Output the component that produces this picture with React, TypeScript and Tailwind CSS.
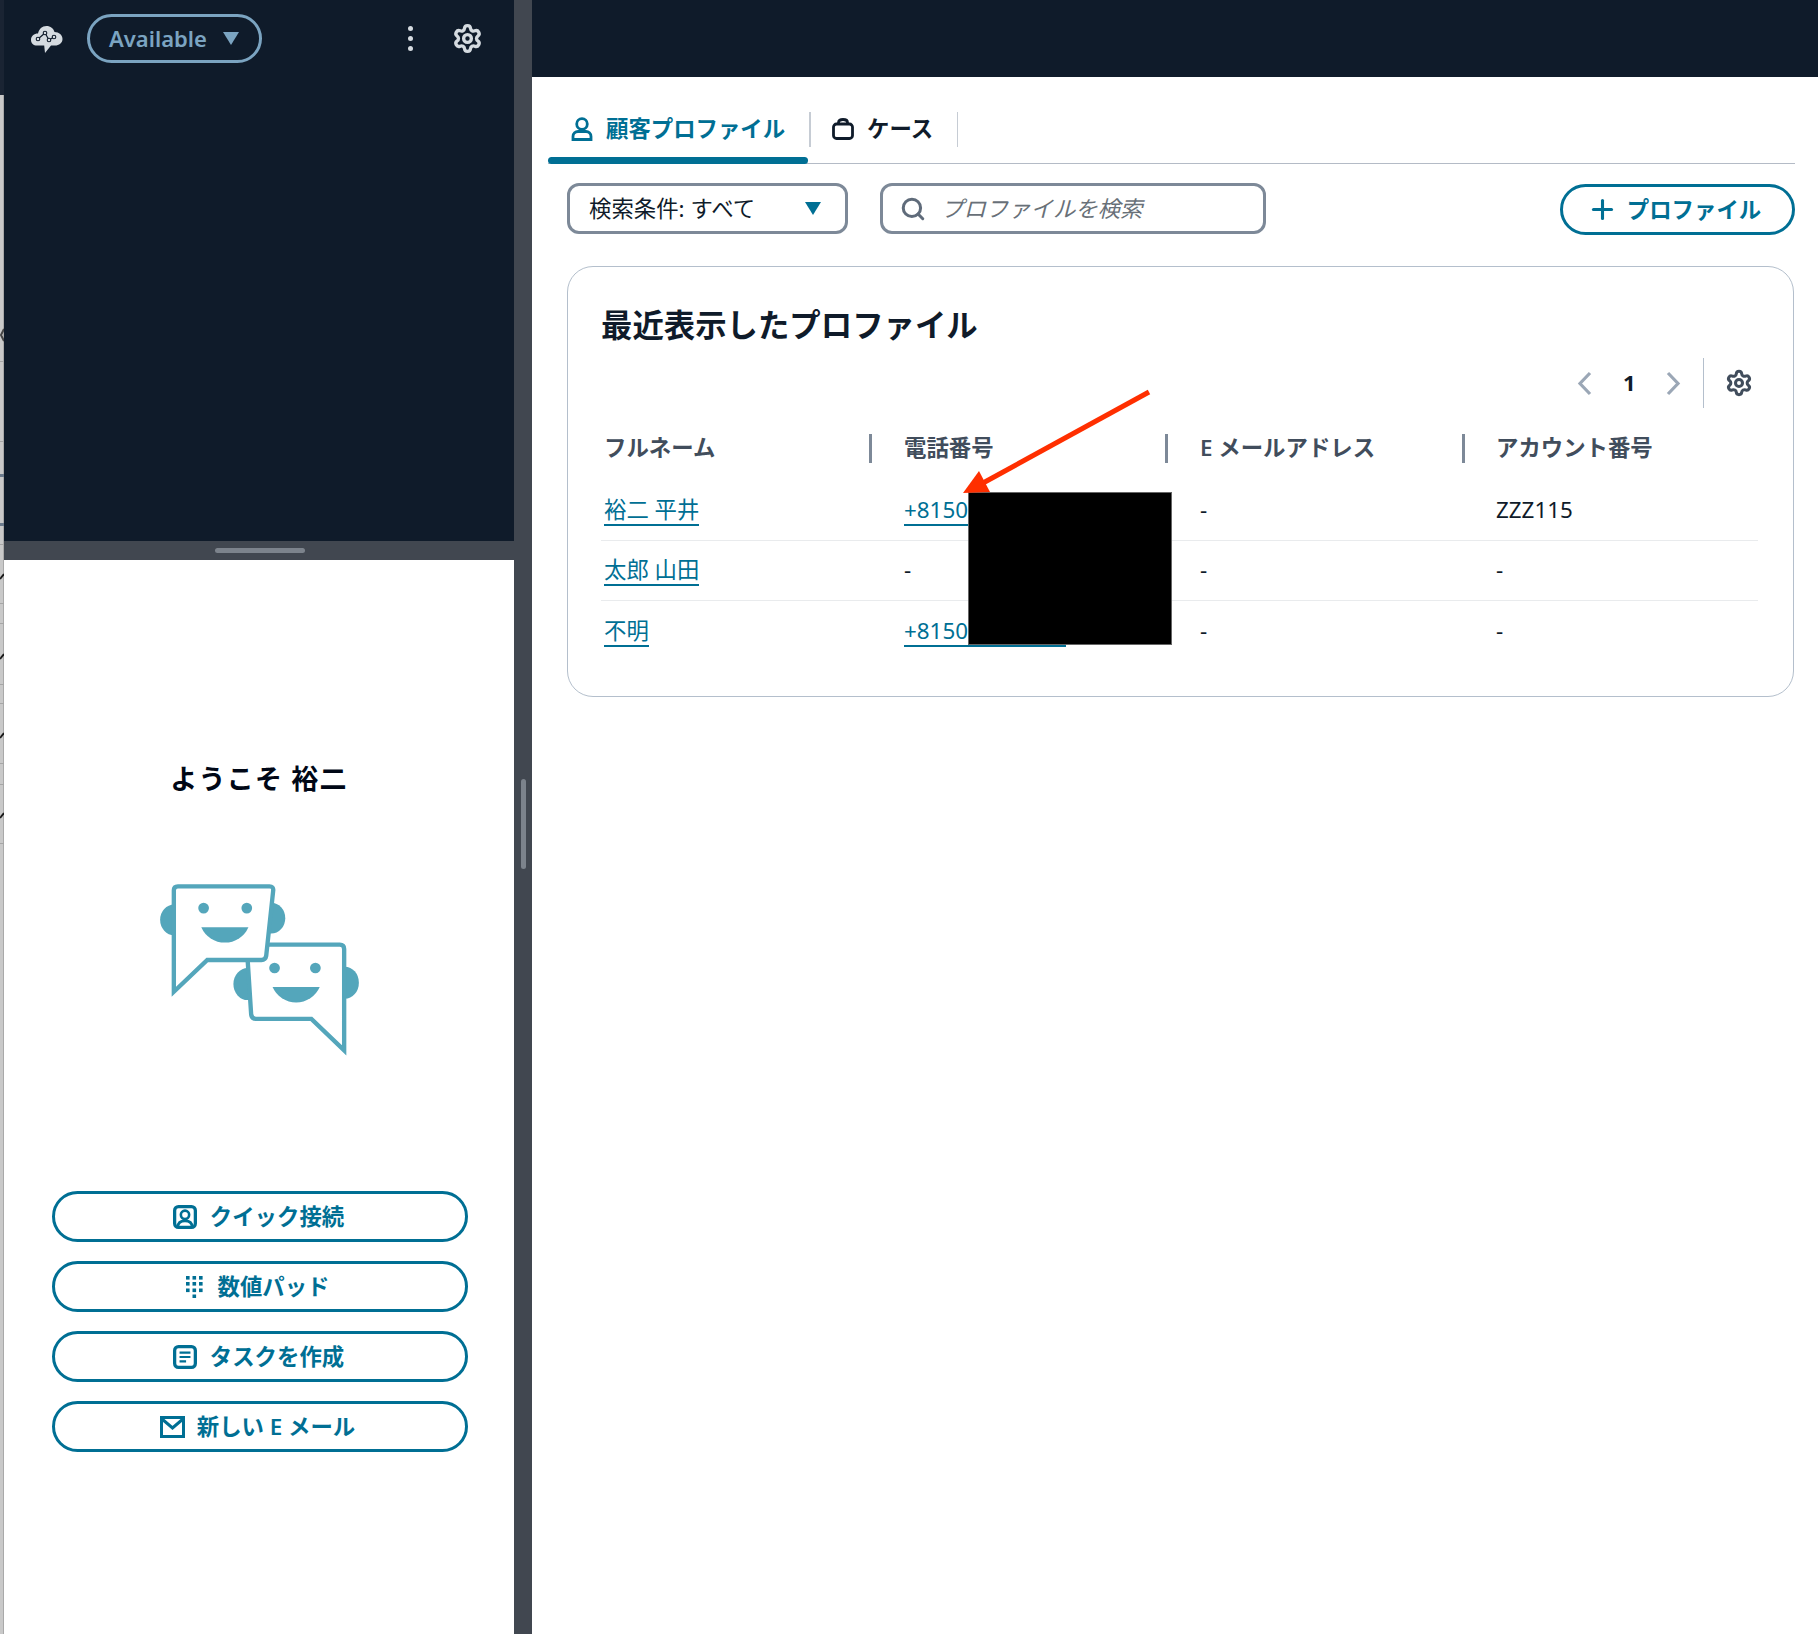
import { Plus, Search, Settings } from "lucide-react";

const buttons = [
  { label: "クイック接続", icon: <ContactIcon /> },
  { label: "数値パッド", icon: <DialpadIcon /> },
  { label: "タスクを作成", icon: <TaskIcon /> },
  { label: "新しい E メール", icon: <MailIcon /> },
];

const rows = [
  { name: "裕二 平井", phone: true, email: "-", account: "ZZZ115" },
  { name: "太郎 山田", phone: false, email: "-", account: "-" },
  { name: "不明", phone: true, email: "-", account: "-" },
];

function CloudLogo() {
  return (
    <svg width="50" height="45" viewBox="0 0 50 45" className="-ml-[9px]">
      <path
        d="M10 24c0-4 3-6.500 7-6.500C18 13 21 10 25.500 10c4 0 7 2.500 8 6 4.500 0 8 3 8 7 0 4-3.500 6.500-7.500 6.500h-4L24 37l-.8-7.500H16c-3.500 0-6-2-6-5.500z"
        fill="#d5dbe0"
      />
      <path d="M17 23l7-6 4 7 5-3" fill="none" stroke="#0f1b2a" strokeWidth="1.200" />
      {[
        [17, 23],
        [24, 17],
        [28, 24],
        [33, 21],
      ].map(([cx, cy]) => (
        <circle key={cx} cx={cx} cy={cy} r="1.800" fill="#d5dbe0" stroke="#0f1b2a" strokeWidth="1.100" />
      ))}
    </svg>
  );
}

function ContactIcon() {
  return (
    <svg width="24" height="24" viewBox="0 0 22 22" fill="none" stroke="#006f94" strokeWidth="3" className="-mr-[2px]">
      <rect x="1.500" y="1.500" width="19" height="19" rx="3.500" />
      <circle cx="11" cy="9" r="3.800" strokeWidth="2.400" />
      <path d="M4.500 20c0-4 3-5.500 6.500-5.500s6.500 1.500 6.500 5.500" strokeWidth="2.400" />
    </svg>
  );
}

function DialpadIcon() {
  return (
    <svg width="17" height="22" viewBox="0 0 17 22" fill="#006f94" className="-ml-[2px]">
      {[0, 6, 12.500].flatMap((y) =>
        [0, 6.500, 13].map((x) => <rect key={`${x}-${y}`} x={x} y={y} width="3.600" height="3.600" />),
      )}
      <rect x="6.500" y="18.500" width="3.600" height="3.600" />
    </svg>
  );
}

function TaskIcon() {
  return (
    <svg width="24" height="24" viewBox="0 0 22 22" fill="none" stroke="#006f94" strokeWidth="3" className="-mr-[2px]">
      <rect x="1.500" y="1.500" width="19" height="19" rx="3.500" />
      <path d="M6 7h10M6 11h10M6 15h6" strokeWidth="2" />
    </svg>
  );
}

function MailIcon() {
  return (
    <svg width="25" height="22" viewBox="0 0 25 22" fill="none" stroke="#006f94" strokeWidth="3" className="-mr-[3px] -ml-[2px]">
      <rect x="1.500" y="1.500" width="22" height="19" />
      <path d="M2 3l10.500 9L23 3" />
    </svg>
  );
}

function BagIcon() {
  return (
    <svg width="22" height="22" viewBox="0 0 22 22" fill="none" stroke="#0f1b2a" strokeWidth="2.800">
      <rect x="1.500" y="6" width="19" height="14.500" rx="3" />
      <path d="M6.500 6V4.500C6.500 2.500 8 1.500 11 1.500s4.500 1 4.500 3V6" />
    </svg>
  );
}

function PersonIcon() {
  return (
    <svg width="22" height="24" viewBox="0 0 22 24" fill="none" stroke="#006f94" strokeWidth="2.800">
      <circle cx="11" cy="7" r="5.300" />
      <path d="M2 22.500v-3c0-3 2.500-5 5-5h8c2.500 0 5 2 5 5v3z" />
    </svg>
  );
}

function Caret({ className }: { className: string }) {
  return (
    <svg width="16" height="13" viewBox="0 0 16 13" className={className}>
      <path d="M0 0h16L8 13z" fill="currentColor" />
    </svg>
  );
}

function PageChevron({ d }: { d: string }) {
  return (
    <svg width="16" height="25" viewBox="0 0 16 25" fill="none" stroke="#9ba7b6" strokeWidth="3.200">
      <path d={d} />
    </svg>
  );
}

function ChatBots() {
  return (
    <svg width="201" height="174" viewBox="120 430 600 520">
      <g fill="#54a6bb">
        <ellipse cx="385" cy="732" rx="43" ry="48" />
        <ellipse cx="675" cy="728" rx="42" ry="48" />
      </g>
      <path
        d="M385 614H660Q673 614 673 627V930L575 836H410Q396 836 395 822L382 620Z"
        fill="#fff"
        stroke="#54a6bb"
        strokeWidth="13"
      />
      <g fill="#54a6bb">
        <circle cx="465" cy="684" r="16" />
        <circle cx="587" cy="684" r="16" />
        <path d="M459 741H600A77 77 0 0 1 459 741Z" />
        <ellipse cx="165" cy="540" rx="42" ry="46" />
        <ellipse cx="455" cy="535" rx="42" ry="46" />
      </g>
      <path
        d="M164 452Q164 440 176 440H450Q462 440 461 452L440 648Q438 660 426 660H264L164 755Z"
        fill="#fff"
        stroke="#54a6bb"
        strokeWidth="13"
      />
      <g fill="#54a6bb">
        <circle cx="253" cy="505" r="16" />
        <circle cx="382" cy="505" r="16" />
        <path d="M246 562H387A77 77 0 0 1 246 562Z" />
      </g>
    </svg>
  );
}

function WindowEdge() {
  const lines = [361, 441, 544, 603, 623, 684, 703, 763, 784, 843];
  const marks = [575, 655, 734, 814];
  return (
    <svg width="4" height="1634" className="shrink-0">
      <rect width="4" height="1634" fill="#c9c9c9" />
      <rect x="3" width="1" height="1634" fill="#a9a9a9" />
      <rect width="4" height="95" fill="#1a2433" />
      {lines.map((y) => (
        <rect key={y} y={y} width="4" height="1" fill="#a6a6a6" />
      ))}
      <rect y="474" width="4" height="3" fill="#6b7a8c" />
      <rect y="523" width="4" height="3" fill="#6b7a8c" />
      <path d="M4 329l-3 6 3 6" fill="none" stroke="#444" strokeWidth="2" />
      {marks.map((y) => (
        <path key={y} d={`M0 ${y + 4}l4-5`} stroke="#1a1a1a" strokeWidth="2" />
      ))}
    </svg>
  );
}

export default function App() {
  return (
    <div className="relative flex h-[1634px] w-[1818px] overflow-hidden bg-white font-['Noto_Sans','Noto_Sans_CJK_JP',sans-serif] text-[22.4px] text-[#0f1b2a]">
      <WindowEdge />

      {/* softphone column */}
      <div className="flex w-[510px] shrink-0 flex-col">
        <div className="h-[541px] bg-[#0f1b2a] pt-[14px]">
          <div className="flex h-[49px] items-center pl-[26px]">
            <CloudLogo />
            <div className="ml-[16px] flex h-[49px] w-[175px] items-center rounded-full border-[3px] border-[#7ba4c1] pl-[19px] text-[22px] font-semibold text-[#7ba4c1]">
              Available
              <Caret className="ml-[16px] text-[#7ba4c1]" />
            </div>
            <div className="ml-[146px] flex flex-col gap-[5px]">
              <span className="h-[5px] w-[5px] rounded-full bg-[#d5dbe0]" />
              <span className="h-[5px] w-[5px] rounded-full bg-[#d5dbe0]" />
              <span className="h-[5px] w-[5px] rounded-full bg-[#d5dbe0]" />
            </div>
            <Settings size={31} strokeWidth={2.6} className="ml-[39px] text-[#d5dbe0]" />
          </div>
        </div>
        <div className="flex h-[19px] items-center justify-center bg-[#414750]">
          <div className="ml-[1px] h-[5px] w-[90px] rounded-full bg-[#7c838c]" />
        </div>
        <div className="flex flex-1 flex-col items-center pt-[204px]">
          <h2 className="text-[27px] leading-[30px] font-bold tracking-[1.2px] text-[#000716]">ようこそ 裕二</h2>
          <div className="mt-[89px]">
            <ChatBots />
          </div>
          <div className="mt-[134px] ml-[1px] flex w-[416px] flex-col gap-[19px]">
            {buttons.map((b) => (
              <button
                key={b.label}
                type="button"
                className="flex h-[51px] items-center justify-center gap-[15px] rounded-full border-[3px] border-[#006f94] pr-[2px] font-semibold text-[#006f94]"
              >
                {b.icon}
                {b.label}
              </button>
            ))}
          </div>
        </div>
      </div>

      <div className="flex w-[18px] shrink-0 justify-center bg-[#414750] pt-[779px]">
        <div className="h-[90px] w-[5px] rounded-full bg-[#7c838c]" />
      </div>

      {/* customer profile */}
      <div className="flex min-w-0 flex-1 flex-col">
        <div className="h-[77px] bg-[#0f1b2a]" />
        <div className="pr-[23px] pl-[16px]">
          <div className="mt-[35px] flex h-[52px] border-b border-[#b4bbc6]">
            <div className="relative h-full w-[263px]">
              <div className="flex h-[35px] items-center gap-[13px] border-r-2 border-[#c6ccd4] pb-[2px] pl-[23px] font-bold text-[#006f94]">
                <PersonIcon />
                顧客プロファイル
              </div>
              <div className="absolute right-[3px] -bottom-px left-0 h-[7px] rounded-full bg-[#006f94]" />
            </div>
            <div className="flex h-[35px] w-[147px] items-center gap-[13px] border-r border-[#c6ccd4] pb-[2px] pl-[21px] font-bold">
              <BagIcon />
              ケース
            </div>
          </div>

          <div className="mt-[19px] flex items-start pl-[19px]">
            <div className="flex h-[51px] w-[281px] items-center justify-between rounded-[12px] border-[3px] border-[#7d8998] pr-[24px] pl-[19px]">
              検索条件: すべて
              <Caret className="text-[#006f94]" />
            </div>
            <div className="ml-[32px] flex h-[51px] w-[386px] items-center gap-[15px] rounded-[12px] border-[3px] border-[#7d8998] pl-[17px]">
              <Search size={26} strokeWidth={2.8} className="text-[#5f6b7a]" />
              <span className="text-[#687078] italic">プロファイルを検索</span>
            </div>
            <button
              type="button"
              className="mt-[1px] ml-auto flex h-[51px] w-[235px] items-center justify-center gap-[9px] rounded-full border-[3px] border-[#006f94] pr-[7px] font-semibold text-[#006f94]"
            >
              <Plus size={31} strokeWidth={2.4} />
              プロファイル
            </button>
          </div>

          <div className="mt-[31px] mr-[1px] ml-[19px] h-[431px] rounded-[26px] border border-[#b4bfcc] pt-[38px] pl-[33px]">
            <h1 className="text-[31.4px] leading-[40px] font-bold">最近表示したプロファイル</h1>

            <div className="mt-[13px] mr-[40px] flex h-[51px] items-center justify-end pb-[1px]">
              <PageChevron d="M13 2L3 12.500L13 23" />
              <span className="mx-[30px] w-[12px] pb-[2px] text-center text-[22px] font-bold">1</span>
              <PageChevron d="M3 2L13 12.500L3 23" />
              <div className="mr-[21px] ml-[22px] h-full w-px bg-[#b4bfcc]" />
              <Settings size={28} strokeWidth={2.6} className="text-[#414d5c]" />
            </div>

            <div className="mt-[25px] mr-[35px]">
              <div className="grid h-[29px] grid-cols-[300px_296px_296px_1fr] grid-rows-[29px] items-center pl-[3px] leading-[20px] font-semibold text-[#414d5c]">
                <div className="flex h-full items-center">
                  <span className="flex-1 pb-[1px]">フルネーム</span>
                  <span className="mr-[32px] h-full w-[3px] bg-[#7d8998]" />
                </div>
                <div className="flex h-full items-center">
                  <span className="flex-1 pb-[1px]">電話番号</span>
                  <span className="mr-[32px] h-full w-[3px] bg-[#7d8998]" />
                </div>
                <div className="flex h-full items-center">
                  <span className="flex-1 pb-[1px]">E メールアドレス</span>
                  <span className="mr-[31px] h-full w-[3px] bg-[#7d8998]" />
                </div>
                <span className="pb-[1px]">アカウント番号</span>
              </div>

              <div className="mt-[18px]">
                {rows.map((row, i) => (
                  <div
                    key={row.name}
                    className={`grid h-[60px] grid-cols-[300px_296px_296px_1fr] items-center pl-[3px] ${i < 2 ? "border-b border-[#e9ebed] pb-[2px]" : ""}`}
                  >
                    <div>
                      <a href="#" className="inline-block border-b-2 border-[#006f94] leading-[28px] text-[#006f94]">
                        {row.name}
                      </a>
                    </div>
                    <div>
                      {row.phone ? (
                        <a
                          href="#"
                          className="inline-block w-[162px] border-b-2 border-[#006f94] leading-[28px] text-[#006f94]"
                        >
                          +8150
                        </a>
                      ) : (
                        "-"
                      )}
                    </div>
                    <div>{row.email}</div>
                    <div>{row.account}</div>
                  </div>
                ))}
              </div>
            </div>
          </div>
        </div>
      </div>

      {/* redaction and annotation on top of the screenshot */}
      <div className="absolute top-[492px] left-[968px] h-[153px] w-[204px] border border-[#666] bg-black" />
      <svg className="absolute top-[385px] left-[955px] h-[115px] w-[200px]" viewBox="955 385 200 115">
        <path d="M1149 392L983 483" stroke="#ff2f00" strokeWidth="5" />
        <path d="M963 493L979 471L990 492Z" fill="#ff2f00" />
      </svg>
    </div>
  );
}
